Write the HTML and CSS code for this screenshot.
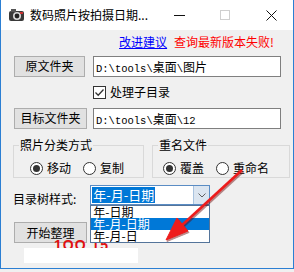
FILE: index.html
```html
<!DOCTYPE html>
<html>
<head>
    <link rel="stylesheet" href="styles.css">
</head>
<body>
    <div class="window">
        <div class="titlebar">
            <svg class="app-icon" width="17" height="14" viewBox="0 0 17 14">
                <rect x="1" y="3" width="15" height="10" rx="2" fill="#3a3a3a"/>
                <rect x="3" y="1" width="5" height="3" fill="#555"/>
                <circle cx="9" cy="8" r="4" fill="#d8d8d8"/>
                <circle cx="9" cy="8" r="2.4" fill="#222"/>
                <rect x="12" y="4" width="3" height="2" fill="#c33"/>
            </svg>
            <span class="title">数码照片按拍摄日期...</span>
            <div class="caption">
                <div class="cap-btn"><span class="cap-min"></span></div>
                <div class="cap-btn"><span class="cap-max"></span></div>
                <div class="cap-btn">
                    <svg width="11" height="11" viewBox="0 0 11 11">
                        <path d="M0.5 0.5 L10.5 10.5 M10.5 0.5 L0.5 10.5" stroke="#111" stroke-width="1"/>
                    </svg>
                </div>
            </div>
        </div>

        <div class="client">
            <div class="links">
                <a class="link">改进建议</a>
                <span class="fail">查询最新版本失败!</span>
            </div>

            <div class="folder-row">
                <div class="btn btn-src">原文件夹</div>
                <div class="path-box">D:\tools\<span class="cjk">桌面</span>\<span class="cjk">图片</span></div>
            </div>

            <div class="check-row">
                <span class="checkbox">
                    <svg width="11" height="11" viewBox="0 0 11 11">
                        <path d="M1.5 5.5 L4.2 8.2 L9.5 2.5" fill="none" stroke="#333" stroke-width="1.3"/>
                    </svg>
                </span>
                <span>处理子目录</span>
            </div>

            <div class="folder-row row-dst">
                <div class="btn btn-dst">目标文件夹</div>
                <div class="path-box">D:\tools\<span class="cjk">桌面</span>\12</div>
            </div>

            <div class="groups">
                <fieldset class="group group-sort">
                    <legend>照片分类方式</legend>
                    <div class="radios">
                        <span class="radio checked"></span><span class="radio-text">移动</span>
                        <span class="radio"></span><span class="radio-text">复制</span>
                    </div>
                </fieldset>
                <fieldset class="group group-dup">
                    <legend>重名文件</legend>
                    <div class="radios">
                        <span class="radio checked"></span><span class="radio-text">覆盖</span>
                        <span class="radio"></span><span class="radio-text">重命名</span>
                    </div>
                </fieldset>
            </div>

            <div class="combo-row">
                <span class="combo-label">目录树样式:</span>
                <div class="combo">
                    <span class="combo-value">年-月-日期</span>
                    <span class="combo-arrow">
                        <svg width="8" height="5" viewBox="0 0 8 5">
                            <path d="M0.5 0.5 L4 4 L7.5 0.5" fill="none" stroke="#606060" stroke-width="1"/>
                        </svg>
                    </span>
                    <div class="combo-list">
                        <div class="combo-item">年-日期</div>
                        <div class="combo-item selected">年-月-日期</div>
                        <div class="combo-item">年-月-日</div>
                    </div>
                </div>
            </div>

            <div class="start-row">
                <div class="btn btn-start">开始整理</div>
            </div>

            <div class="watermark">1OO 15</div>
            <div class="watermark-cover"></div>
        </div>

        <svg class="arrow" width="294" height="270" viewBox="0 0 294 270">
            <g fill="#6a0000" stroke="#6a0000" opacity="0.45" transform="translate(1,1.5)">
                <line x1="242" y1="170" x2="180" y2="227" stroke-width="2.6"/>
                <polygon points="166,240 188,231 177,218"/>
            </g>
            <g fill="#ee1c1c" stroke="#ee1c1c">
                <line x1="242" y1="170" x2="180" y2="227" stroke-width="2.6"/>
                <polygon points="166,240 188,231 177,218"/>
            </g>
        </svg>
    </div>
</body>
</html>
```

FILE: styles.css
```css
:root {
    --accent: #2b7fd3;
    --face: #f0f0f0;
    --btn-face: #e1e1e1;
    --btn-border: #adadad;
    --box-border: #7f7f7f;
    --group-border: #d9d9d9;
    --select: #0078d7;
}

body {
    margin: 0;
    background: var(--face);
    font-family: "Noto Sans CJK SC", "Liberation Sans", sans-serif;
    font-size: 12px;
    color: #000;
}

.window {
    position: relative;
    width: 294px;
    height: 269px;
    box-sizing: border-box;
    border: 1px solid var(--accent);
    border-top: none;
    background: var(--face);
}

.titlebar {
    height: 30px;
    background: #fff;
    display: flex;
    align-items: center;
}

.app-icon {
    margin-left: 7px;
}

.title {
    margin-left: 5px;
    line-height: 14px;
}

.caption {
    margin-left: auto;
    display: flex;
    margin-right: -1px;
}

.cap-btn {
    width: 46px;
    height: 30px;
    display: flex;
    align-items: center;
    justify-content: center;
}

.cap-min {
    width: 11px;
    height: 1px;
    background: #111;
}

.cap-max {
    width: 8px;
    height: 8px;
    border: 1px solid #cfcfcf;
}

.client {
    position: relative;
    height: 239px;
}

.links {
    display: flex;
    justify-content: flex-end;
    gap: 7px;
    padding: 5px 19px 0 0;
    line-height: 14px;
}

.link {
    color: #0000ff;
    text-decoration: underline;
}

.fail {
    color: #ff0000;
}

.folder-row {
    display: flex;
    align-items: center;
    margin-top: 6px;
    padding-left: 13px;
    height: 22px;
}

.row-dst {
    margin-top: 8px;
}

.btn {
    height: 19px;
    border: 1px solid var(--btn-border);
    background: var(--btn-face);
    display: flex;
    align-items: center;
    justify-content: center;
    line-height: 14px;
}

.btn-src { width: 69px; }
.btn-dst { width: 71px; }
.btn-start { width: 71px; }

.path-box {
    margin-left: auto;
    margin-right: 12px;
    width: 184px;
    height: 19px;
    border: 1px solid var(--box-border);
    background: #fff;
    font-family: "Liberation Mono", "Noto Sans CJK SC", monospace;
    font-size: 10.5px;
    line-height: 19px;
    padding-left: 2px;
    box-sizing: content-box;
}

.path-box .cjk {
    font-family: "Noto Sans CJK SC", sans-serif;
    font-size: 12px;
}

.check-row {
    display: flex;
    align-items: center;
    margin-top: 8px;
    padding-left: 92px;
    height: 14px;
    line-height: 14px;
}

.checkbox {
    width: 11px;
    height: 11px;
    border: 1px solid #333;
    background: #fff;
    margin-right: 4px;
    display: flex;
}

.groups {
    display: flex;
    margin-top: 9px;
    padding-left: 12px;
    gap: 8px;
}

.group {
    margin: 0;
    padding: 0 0 0 5px;
    border: 1px solid var(--group-border);
    height: 38px;
    box-sizing: content-box;
}

.group-sort { width: 124px; }
.group-dup { width: 131px; }

.group legend {
    padding: 0 1px;
    line-height: 14px;
}

.radios {
    display: flex;
    align-items: center;
    margin-top: 9px;
    height: 14px;
    line-height: 14px;
}

.group-sort .radios { padding-left: 11px; }
.group-dup .radios { padding-left: 5px; }

.radio {
    width: 11px;
    height: 11px;
    border: 1px solid #333;
    border-radius: 50%;
    background: #fff;
    display: flex;
    align-items: center;
    justify-content: center;
    margin-right: 4px;
}

.radio-text + .radio {
    margin-left: 12px;
}

.radio.checked::after {
    content: "";
    width: 7px;
    height: 7px;
    border-radius: 50%;
    background: #333;
}

.combo-row {
    display: flex;
    margin-top: 7px;
    padding-left: 12px;
    height: 20px;
}

.combo-label {
    margin-top: 7px;
    line-height: 14px;
}

.combo {
    position: relative;
    margin-left: 14px;
    width: 118px;
    height: 18px;
    border: 1px solid #5a8cc4;
    background: #fff;
    display: flex;
    align-items: center;
    z-index: 3;
}

.combo-value {
    margin-left: 1px;
    padding: 0 1px;
    background: var(--select);
    color: #fff;
    font-size: 13px;
    line-height: 16px;
}

.combo-arrow {
    margin-left: auto;
    width: 15px;
    height: 18px;
    border-left: 1px solid #a9c3df;
    background: #dbe5f0;
    display: flex;
    align-items: center;
    justify-content: center;
}

.combo-list {
    position: absolute;
    left: -1px;
    top: 19px;
    width: 118px;
    border: 1px solid #54749a;
    background: #fff;
}

.combo-item {
    font-size: 12px;
    line-height: 12px;
    height: 12px;
    padding-left: 2px;
}

.combo-item.selected {
    background: var(--select);
    color: #fff;
}

.start-row {
    margin-top: 17px;
    padding-left: 13px;
}

.watermark {
    position: absolute;
    left: 53px;
    top: 207px;
    color: #e01010;
    font-family: "Liberation Sans", sans-serif;
    font-weight: bold;
    font-size: 14px;
    letter-spacing: 1px;
    line-height: 16px;
    z-index: 1;
}

.watermark-cover {
    position: absolute;
    left: 23px;
    top: 218px;
    width: 114px;
    height: 15px;
    background: #fff;
    z-index: 2;
}

.arrow {
    position: absolute;
    left: -1px;
    top: 0;
    z-index: 5;
}
```
